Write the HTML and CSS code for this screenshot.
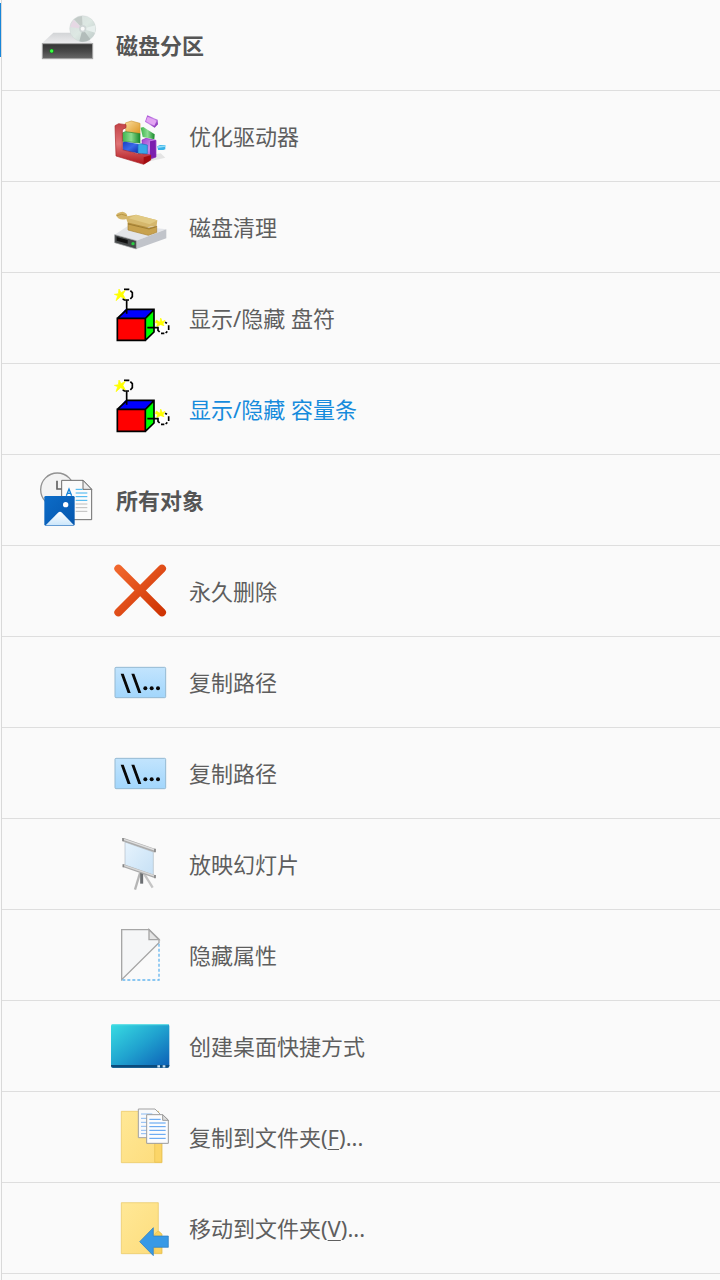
FILE: index.html
```html
<!DOCTYPE html>
<html lang="zh-CN">
<head>
<meta charset="utf-8">
<meta name="viewport" content="width=device-width, initial-scale=1">
<title>磁盘分区</title>
<link rel="stylesheet" href="styles.css">
</head>
<body>
<svg class="defs" aria-hidden="true">
  <defs>
    <linearGradient id="front" x1="0" y1="0" x2="0" y2="1"><stop offset="0" stop-color="#343434"/><stop offset=".5" stop-color="#484848"/><stop offset="1" stop-color="#686868"/></linearGradient>
    <linearGradient id="steel" x1="0" y1="0" x2="0" y2="1"><stop offset="0" stop-color="#d2d4d6"/><stop offset="1" stop-color="#ececee"/></linearGradient>
    <linearGradient id="disc" x1="0" y1="0" x2="1" y2="1"><stop offset="0" stop-color="#d8dede"/><stop offset=".5" stop-color="#dde8e3"/><stop offset="1" stop-color="#bcc8c6"/></linearGradient>
    <linearGradient id="red" x1="0" y1="0" x2="0" y2="1"><stop offset="0" stop-color="#c44347"/><stop offset=".5" stop-color="#e07476"/><stop offset="1" stop-color="#b0161c"/></linearGradient>
    <linearGradient id="gold" x1="0" y1="0" x2="1" y2="1"><stop offset="0" stop-color="#f9dc9a"/><stop offset="1" stop-color="#dc9420"/></linearGradient>
    <linearGradient id="green" x1="0" y1="0" x2="1" y2="0"><stop offset="0" stop-color="#3cb44c"/><stop offset=".5" stop-color="#8cdc90"/><stop offset="1" stop-color="#16872a"/></linearGradient>
    <linearGradient id="blue" x1="0" y1="0" x2="1" y2="1"><stop offset="0" stop-color="#1a3fc4"/><stop offset=".5" stop-color="#3a6ae8"/><stop offset="1" stop-color="#0d2aa4"/></linearGradient>
    <linearGradient id="purple" x1="0" y1="0" x2="1" y2="1"><stop offset="0" stop-color="#a040d0"/><stop offset=".5" stop-color="#c78ae8"/><stop offset="1" stop-color="#7a18ae"/></linearGradient>
    <linearGradient id="cross" x1="0" y1="0" x2="1" y2="1"><stop offset="0" stop-color="#f0662c"/><stop offset="1" stop-color="#cf3404"/></linearGradient>
    <linearGradient id="plate" x1="0" y1="0" x2="0" y2="1"><stop offset="0" stop-color="#c2e4fd"/><stop offset="1" stop-color="#a2d6fc"/></linearGradient>
    <linearGradient id="photo" x1="0" y1="0" x2="1" y2="1"><stop offset="0" stop-color="#0c6cc8"/><stop offset="1" stop-color="#0556ad"/></linearGradient>
    <linearGradient id="hill" x1="0" y1="0" x2="0" y2="1"><stop offset="0" stop-color="#ffffff"/><stop offset="1" stop-color="#cbe6fb"/></linearGradient>
    <linearGradient id="screen" x1="0" y1="0" x2="1" y2="1"><stop offset="0" stop-color="#e6f3fd"/><stop offset="1" stop-color="#c6e0f5"/></linearGradient>
    <linearGradient id="desk" x1="0" y1="0" x2="1" y2="1"><stop offset="0" stop-color="#38dce2"/><stop offset=".5" stop-color="#20a2cf"/><stop offset="1" stop-color="#0c5eb6"/></linearGradient>
    <linearGradient id="folder" x1="0" y1="0" x2="1" y2="1"><stop offset="0" stop-color="#ffe896"/><stop offset="1" stop-color="#fddc7c"/></linearGradient>
    <symbol id="cube" viewBox="33 24 180 180">
      <path d="M54 114 76 88H162L136 114Z" fill="#00f"/>
      <path d="M136 114 162 88V156L136 182Z" fill="#0f0"/>
      <path d="M53 115H136V181H53Z" fill="#f00"/>
      <path d="M52 115H136V181H52ZM52 115 81 88H162V156L136 181M136 115 162 89M80 101V61M142 143H174" fill="none" stroke="#000" stroke-width="5"/>
      <path d="M75 28H87L92 32 97 39V49L92 56 87 60H75L69 56V32Z" fill="#fff"/>
      <path d="M72 28H88M91 32 97 38V50L91 57M87 60H73L68 56" fill="none" stroke="#000" stroke-width="5"/>
      <path d="M184 127H197L206 137V150L197 159H183L174 150V137Z" fill="#fff"/>
      <path d="M195 127 201 130M206 136V150M202 154 197 159M193 160H183M179 156 174 151V140" fill="none" stroke="#000" stroke-width="5"/>
      <path d="M57 27 63 38 76 31 69 43 76 57 62 50 48 62 53 47 43 43 55 41Z" fill="#ff0" stroke="#ff0" stroke-width="2"/>
      <path d="M169 120 180 127 182 114 187 125 195 121 189 132 192 137 182 134 170 139 173 130 166 128Z" fill="#ff0" stroke="#ff0" stroke-width="2"/>
    </symbol>
    <symbol id="path" viewBox="33 306 180 180">
      <rect x="45" y="352" width="152" height="91" rx="3" fill="url(#plate)" stroke="#95b9d2" stroke-width="3"/>
      <path d="M62 371H71L92 429H83ZM94 371H103L124 429H115Z" fill="#080808"/>
      <g fill="#080808"><circle cx="136" cy="415" r="6"/><circle cx="155" cy="415" r="6"/><circle cx="174" cy="415" r="6"/></g>
    </symbol>
  </defs>
</svg>
<div class="track"><div class="thumb"></div></div>
<main class="menu">
  <section>
    <h2 class="row group">
      <svg class="icon" viewBox="114 45 180 180" aria-hidden="true">
        <path d="M160 98H246L278 130H126Z" fill="url(#steel)"/>
        <rect x="127" y="131" width="151" height="45" fill="url(#front)" stroke="#a4a4a4" stroke-width="3"/>
        <circle cx="155" cy="153" r="7" fill="#177a22"/><circle cx="155" cy="153" r="5" fill="#3cff44"/>
        <circle cx="248" cy="86" r="39" fill="url(#disc)" stroke="#c7cecd" stroke-width="1"/>
        <path d="M248 86 222 58A39 39 0 0 1 246 48Z" fill="#c3cbc8"/>
        <path d="M248 86 271 118A39 39 0 0 1 238 124Z" fill="#b2bcba"/>
        <path d="M248 86 210 81 220 59Z" fill="#e6d8e4"/>
        <path d="M248 86 286 76 285 98Z" fill="#e7efed"/>
        <circle cx="248" cy="86" r="11" fill="#cfd6d6"/><circle cx="248" cy="86" r="6" fill="#fafafa"/>
      </svg>
      <span>磁盘分区</span>
    </h2>
    <ul class="items">
      <li><button class="row item" type="button">
        <svg class="icon" viewBox="33 3 180 180" aria-hidden="true">
          <path d="M130 178 153 168 196 158 182 145 150 150Z" fill="#e4e4e4"/>
          <path d="M76 54 94 48 120 55V88L78 82Z" fill="url(#gold)" stroke="#cf9a3c" stroke-width="2"/>
          <path d="M122 68 130 66 164 88 163 103 128 96Z" fill="url(#green)"/>
          <path d="M67 84 76 80 120 86V114L68 109Z" fill="url(#green)" stroke="#248a35" stroke-width="2"/>
          <path d="M126 105 138 100 168 106V156L152 162 128 148Z" fill="url(#purple)" stroke="#8b2bbb" stroke-width="2"/>
          <path d="M150 109 167 106V156L150 160Z" fill="#7b1fae"/>
          <path d="M68 112 76 110 116 117V145L68 138Z" fill="url(#blue)"/>
          <path d="M114 120 122 116 142 120V146L114 146Z" fill="#39a7e8" stroke="#1873bb" stroke-width="2"/>
          <path d="M45 62 56 56 78 59V68L67 74V134L112 146 152 150V165L131 178 48 153Z" fill="url(#red)" stroke="#a9272b" stroke-width="2"/>
          <path d="M131 157 152 151V165L131 178Z" fill="#a20b10"/>
          <path d="M142 31 173 44 174 58 164 68 135 50Z" fill="url(#purple)"/>
          <path d="M143 35 170 47 163 62 138 49Z" fill="#e3a5f2"/>
          <path d="M172 124 180 120H196V133L190 135H174Z" fill="#39b2e8"/><path d="M173 124 196 121V125L175 129Z" fill="#90dcf7"/>
        </svg>
        <span>优化驱动器</span>
      </button></li>
      <li><button class="row item" type="button">
        <svg class="icon" viewBox="33 6 180 180" aria-hidden="true">
          <path d="M44 119 87 91 199 103 109 137Z" fill="#e3e5e9"/>
          <path d="M109 137 199 103V130L109 162Z" fill="#c1c4ca"/>
          <path d="M44 119 109 137V162L44 143Z" fill="#454849" stroke="#a4a6a8" stroke-width="2"/>
          <path d="M50 126 83 135V146L50 137Z" fill="#111"/>
          <circle cx="99" cy="146" r="5" fill="#28ce42"/>
          <path d="M48 61Q50 52 68 50 82 53 82 64L108 59 172 76 170 92 130 98 84 86 79 72Q56 78 48 61Z" fill="#d5b76c"/>
          <path d="M86 70 108 59 172 76 149 88Z" fill="#e1c982"/>
          <path d="M84 84 147 99 170 93V112L145 121 84 105Z" fill="#c8a24e" stroke="#a98230" stroke-width="2"/>
          <path d="M84 87 147 102 170 95" fill="none" stroke="#8a6a24" stroke-width="2"/>
          <path d="M50 62Q65 54 80 62" fill="none" stroke="#b79544" stroke-width="3"/>
        </svg>
        <span>磁盘清理</span>
      </button></li>
      <li><button class="row item" type="button">
        <svg class="icon" aria-hidden="true"><use href="#cube"/></svg>
        <span>显示/隐藏 盘符</span>
      </button></li>
      <li><button class="row item active" type="button">
        <svg class="icon" aria-hidden="true"><use href="#cube"/></svg>
        <span>显示/隐藏 容量条</span>
      </button></li>
    </ul>
  </section>
  <section>
    <h2 class="row group">
      <svg class="icon" viewBox="24 30 180 180" aria-hidden="true">
        <circle cx="82" cy="89" r="50" fill="#f3f3f3" stroke="#929292" stroke-width="4"/>
        <path d="M81 62V87H96" fill="none" stroke="#626262" stroke-width="5"/>
        <path d="M95 61H159L185 88V179H95Z" fill="#fbfbfb" stroke="#6c6c6c" stroke-width="3"/>
        <path d="M159 61V88H185Z" fill="#eee" stroke="#6c6c6c" stroke-width="3"/>
        <path d="M109 107 117 87 125 107M112 100H122" fill="none" stroke="#1683d8" stroke-width="4"/>
        <path d="M137 88H158M137 99H172M137 110H172M137 121H172" stroke="#38b0ef" stroke-width="3"/>
        <path d="M137 132H172M137 143H172M137 154H172" stroke="#bcbcbc" stroke-width="3"/>
        <rect x="43" y="108" width="91" height="89" rx="4" fill="url(#photo)"/>
        <path d="M47 196 84 158Q90 153 96 158L132 196Z" fill="url(#hill)"/>
        <circle cx="107" cy="134" r="8" fill="#fff"/>
      </svg>
      <span>所有对象</span>
    </h2>
    <ul class="items">
      <li><button class="row item" type="button">
        <svg class="icon" viewBox="33 33 180 180" aria-hidden="true">
          <path d="M55 56 186 187M186 56 55 187" fill="none" stroke="url(#cross)" stroke-width="24" stroke-linecap="round"/>
        </svg>
        <span>永久删除</span>
      </button></li>
      <li><button class="row item" type="button">
        <svg class="icon" aria-hidden="true"><use href="#path"/></svg>
        <span>复制路径</span>
      </button></li>
      <li><button class="row item" type="button">
        <svg class="icon" aria-hidden="true"><use href="#path"/></svg>
        <span>复制路径</span>
      </button></li>
      <li><button class="row item" type="button">
        <svg class="icon" viewBox="33 12 180 180" aria-hidden="true">
          <path d="M120 129 105 179" stroke="#b5b5b5" stroke-width="7"/>
          <path d="M132 131 158 173" stroke="#c5c5c5" stroke-width="7"/>
          <path d="M125 126V161" stroke="#6c6f72" stroke-width="9"/>
          <path d="M75 36 160 66V137L75 108Z" fill="url(#screen)" stroke="#b2bdc5" stroke-width="2"/>
          <path d="M70 29 165 62" stroke="#aaa" stroke-width="10"/><path d="M71 28 165 60" stroke="#dedede" stroke-width="4"/>
          <path d="M70 107 165 140" stroke="#a9a9a9" stroke-width="9"/><path d="M71 106 165 138" stroke="#d8d8d8" stroke-width="4"/>
          <path d="M69 24V34M165 56V67M70 103V112M165 135V145" stroke="#858585" stroke-width="5"/>
        </svg>
        <span>放映幻灯片</span>
      </button></li>
      <li><button class="row item" type="button">
        <svg class="icon" viewBox="33 30 180 180" aria-hidden="true">
          <path d="M65 44H147L177 73V83L65 194Z" fill="#f5f6f7" stroke="#a6a6a6" stroke-width="4"/>
          <path d="M147 44V74H177Z" fill="#e5e5e5" stroke="#a6a6a6" stroke-width="4"/>
          <path d="M177 86V195H66" fill="none" stroke="#66b6ef" stroke-width="4" stroke-dasharray="9 6"/>
        </svg>
        <span>隐藏属性</span>
      </button></li>
      <li><button class="row item" type="button">
        <svg class="icon" viewBox="33 18 180 180" aria-hidden="true">
          <rect x="33" y="42" width="175" height="131" rx="6" fill="url(#desk)"/>
          <path d="M36 44H205" stroke="#70e3e8" stroke-width="3"/>
          <path d="M33 165H208V168Q208 173 202 173H39Q33 173 33 167Z" fill="#0a4b7d"/>
          <path d="M172 169H180M188 169H196" stroke="#cbe3f4" stroke-width="7"/>
        </svg>
        <span>创建桌面快捷方式</span>
      </button></li>
      <li><button class="row item" type="button">
        <svg class="icon" viewBox="33 36 180 180" aria-hidden="true">
          <path d="M64 49H176V135H186V203H64Z" fill="url(#folder)" stroke="#e9c65d" stroke-width="2"/>
          <path d="M164 202V137H185V202Z" fill="#fbd568" stroke="#e7bf50" stroke-width="2"/>
          <path d="M115 42H165L181 58V128H115Z" fill="#f8f9fb" stroke="#a2a2a2" stroke-width="3"/>
          <path d="M123 57H157M123 70H170M123 82H170M123 94H170M123 106H170M123 116H170" stroke="#8abaf2" stroke-width="3"/>
          <path d="M140 59H188L205 75V145H140Z" fill="#fcfcfd" stroke="#9c9c9c" stroke-width="3"/>
          <path d="M188 59V76H205Z" fill="#ddd" stroke="#9c9c9c" stroke-width="3"/>
          <path d="M148 73H182M148 84H197M148 95H197M148 106H197M148 118H197M148 130H197" stroke="#519cf0" stroke-width="3"/>
        </svg>
        <span>复制到文件夹(<u>F</u>)...</span>
      </button></li>
      <li><button class="row item" type="button">
        <svg class="icon" viewBox="33 54 180 180" aria-hidden="true">
          <path d="M64 68H175V152L186 162V221H64Z" fill="url(#folder)" stroke="#e9c65d" stroke-width="2"/>
          <path d="M164 220V162L174 153 185 163V220Z" fill="#fbd260" stroke="#e7bf50" stroke-width="2"/>
          <path d="M119 185 160 143V168H205V202H160V227Z" fill="#3899e6" stroke="#2878bd" stroke-width="2"/>
        </svg>
        <span>移动到文件夹(<u>V</u>)...</span>
      </button></li>
    </ul>
  </section>
</main>
</body>
</html>
```
FILE: styles.css
```css
* {
  box-sizing: border-box;
}

body {
  display: flex;
  min-height: 100vh;
  margin: 0;
  background: #fafafa;
  color: #5e5e5e;
  font-family: "Noto Sans", "Noto Sans CJK SC", sans-serif;
  font-size: 22px;
  line-height: 32px;
}

.defs {
  position: absolute;
  width: 0;
  height: 0;
}

.track {
  width: 1px;
  padding-top: 3px;
}

.thumb {
  height: 54px;
  background: #1886d9;
}

.menu {
  flex: 1;
  min-width: 0;
  border-left: 1px solid #d9d9d9;
}

.items {
  margin: 0;
  padding: 0;
  list-style: none;
}

.row {
  display: flex;
  align-items: center;
  gap: 18px;
  width: 100%;
  margin: 0;
  padding: 15px 16px 15px 36px;
  border: 0;
  border-bottom: 1px solid #dedede;
  background: none;
  color: inherit;
  font: inherit;
  text-align: left;
}

.group {
  color: #555;
  font-weight: 700;
}

.item {
  padding-left: 109px;
  cursor: pointer;
}

.item:hover,
.active {
  color: #168bdc;
}

.icon {
  flex: none;
  width: 60px;
  height: 60px;
}

u {
  text-decoration-thickness: 1px;
  text-underline-offset: 3px;
}
```
